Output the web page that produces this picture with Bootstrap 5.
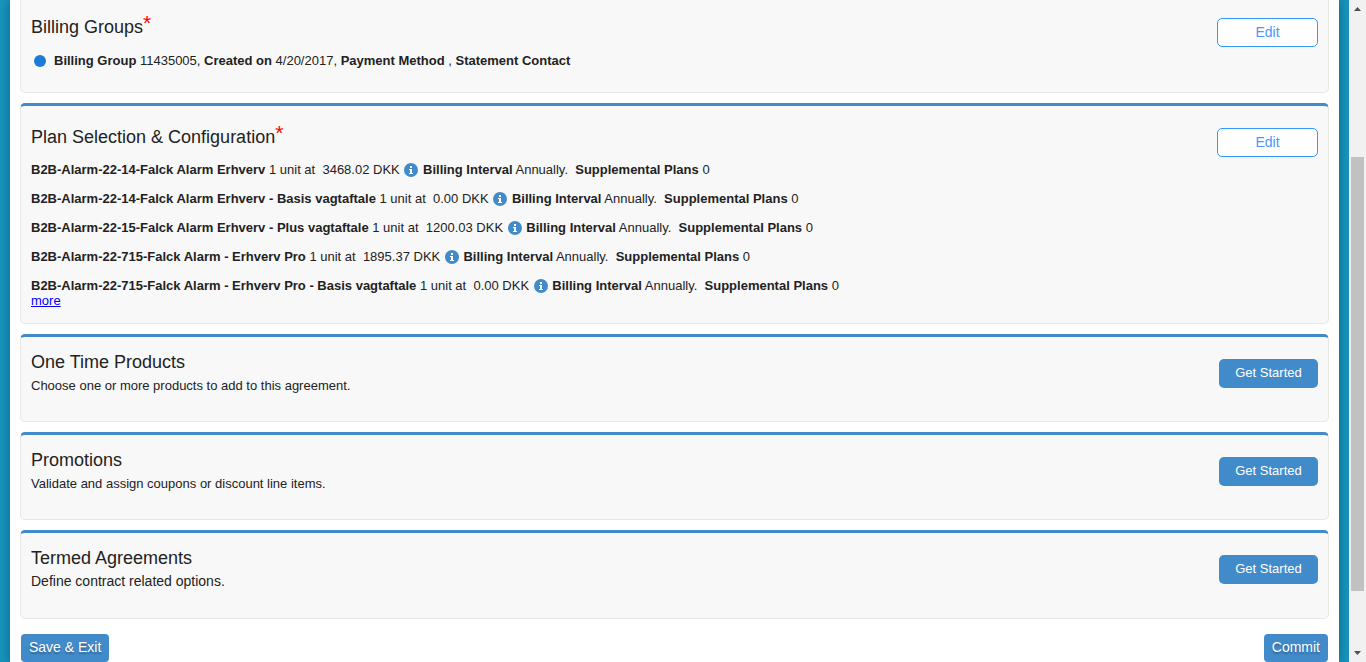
<!DOCTYPE html>
<html lang="en">
<head>
<meta charset="utf-8">
<meta name="viewport" content="width=device-width, initial-scale=1">
<title>Agreement setup</title>
<link href="https://cdn.jsdelivr.net/npm/bootstrap@5.3.0/dist/css/bootstrap.min.css" rel="stylesheet">
<style>
  body { font: 13px/15px "Liberation Sans", Arial, sans-serif; color: #222; background: #1794be; }
  .page-area { padding: 0 10px; }
  .sheet { display: flow-root; background: #fff; box-shadow: 0 0 10px rgba(0,0,0,.35); padding: 0 10px; }
  .sections { margin-top: -7px; gap: 10px; }
  .panel { background: #f8f8f8; border: 1px solid #e7e7e7; border-top: 3px solid #428bca; border-radius: 5px; padding: 0 10px; }
  .panel-billing { min-height: 100px; }
  .panel-plans { min-height: 221px; }
  .panel-short { min-height: 88px; }
  .panel-terms { min-height: 89px; font-size: 14px; }
  .panel h2 { font-size: 18px; line-height: 20px; font-weight: 400; margin: 15px 0 6px; color: #222; }
  .panel h2.required { margin: 21px 0 16px; }
  .required span { color: #f00; font-size: 21px; line-height: 0; vertical-align: 3px; }
  .panel .btn { margin-top: 22px; height: 29px; padding: 0 0 2px; line-height: 20px; border-radius: 5px; }
  .btn-edit { width: 101px; font-size: 14px; background: #fff; border: 1px solid #3399ff; color: #4d94ff; }
  .btn-start { width: 99px; font-size: 13px; }
  .btn-start, .btn-foot { background: #428bca; border: 0; color: #fff; }
  .btn-start:hover, .btn-foot:hover { background: #3276b1; color: #fff; }
  .btn-foot { height: 28px; padding: 0 8px 2px; font-size: 14px; line-height: 20px; border-radius: 4px; text-shadow: 0 2px 2px rgba(0,0,0,.3); }
  .foot-row { padding: 15px 1px 0; }
  .plan-list { gap: 14px; }
  .panel-plans h2.required { margin-bottom: 15px; }
  .dot { width: 12px; height: 12px; background: #1c7cd5; margin: 0 8px 0 3px; }
  .info { width: 14px; height: 14px; vertical-align: -3px; margin: 0 1px; }
  .more, .more:hover { color: #00f; }
  .scroll-strip { width: 17px; background: #f1f1f1; }
  .scroll-strip svg { width: 17px; height: 17px; flex: none; }
  .thumb { background: #c1c1c1; flex: 434 0 0; width: 13px; }
  .gap-above { flex: 140 0 0; }
  .gap-below { flex: 54 0 0; }
</style>
</head>
<body class="vh-100 overflow-hidden d-flex">
<svg class="d-none"><symbol id="info" viewBox="0 0 14 14"><circle cx="7" cy="7" r="7" fill="#428bca"/><path d="M6 3h2v2H6zM5 6h3v4h1v1H5v-1h1V7H5z" fill="#fff"/></symbol></svg>
<div class="page-area flex-grow-1 overflow-hidden">
  <main class="sheet h-100">
    <div class="sections d-flex flex-column">
      <section class="panel panel-billing d-flex justify-content-between align-items-start">
        <div>
          <h2 class="required">Billing Groups<span>*</span></h2>
          <div class="d-flex align-items-center"><i class="dot rounded-circle"></i><div><b>Billing Group</b> 11435005, <b>Created on</b> 4/20/2017, <b>Payment Method</b> , <b>Statement Contact</b></div></div>
        </div>
        <button type="button" class="btn btn-edit">Edit</button>
      </section>
      <section class="panel panel-plans d-flex justify-content-between align-items-start">
        <div>
          <h2 class="required">Plan Selection &amp; Configuration<span>*</span></h2>
          <ul class="plan-list list-unstyled d-flex flex-column mb-0">
            <li><b>B2B-Alarm-22-14-Falck Alarm Erhverv</b> 1 unit at &nbsp;3468.02 DKK <svg class="info"><use href="#info"/></svg> <b>Billing Interval</b> Annually. &nbsp;<b>Supplemental Plans</b> 0</li>
            <li><b>B2B-Alarm-22-14-Falck Alarm Erhverv - Basis vagtaftale</b> 1 unit at &nbsp;0.00 DKK <svg class="info"><use href="#info"/></svg> <b>Billing Interval</b> Annually. &nbsp;<b>Supplemental Plans</b> 0</li>
            <li><b>B2B-Alarm-22-15-Falck Alarm Erhverv - Plus vagtaftale</b> 1 unit at &nbsp;1200.03 DKK <svg class="info"><use href="#info"/></svg> <b>Billing Interval</b> Annually. &nbsp;<b>Supplemental Plans</b> 0</li>
            <li><b>B2B-Alarm-22-715-Falck Alarm - Erhverv Pro</b> 1 unit at &nbsp;1895.37 DKK <svg class="info"><use href="#info"/></svg> <b>Billing Interval</b> Annually. &nbsp;<b>Supplemental Plans</b> 0</li>
            <li><b>B2B-Alarm-22-715-Falck Alarm - Erhverv Pro - Basis vagtaftale</b> 1 unit at &nbsp;0.00 DKK <svg class="info"><use href="#info"/></svg> <b>Billing Interval</b> Annually. &nbsp;<b>Supplemental Plans</b> 0</li>
          </ul>
          <a href="#" class="more">more</a>
        </div>
        <button type="button" class="btn btn-edit">Edit</button>
      </section>
      <section class="panel panel-short d-flex justify-content-between align-items-start">
        <div><h2>One Time Products</h2><div>Choose one or more products to add to this agreement.</div></div>
        <button type="button" class="btn btn-start">Get Started</button>
      </section>
      <section class="panel panel-short d-flex justify-content-between align-items-start">
        <div><h2>Promotions</h2><div>Validate and assign coupons or discount line items.</div></div>
        <button type="button" class="btn btn-start">Get Started</button>
      </section>
      <section class="panel panel-terms d-flex justify-content-between align-items-start">
        <div><h2>Termed Agreements</h2><div>Define contract related options.</div></div>
        <button type="button" class="btn btn-start">Get Started</button>
      </section>
    </div>
    <div class="foot-row d-flex justify-content-between">
      <button type="button" class="btn btn-foot">Save &amp; Exit</button>
      <button type="button" class="btn btn-foot">Commit</button>
    </div>
  </main>
</div>
<div class="scroll-strip d-flex flex-column align-items-center flex-shrink-0" aria-hidden="true">
  <svg viewBox="0 0 17 17"><path d="M5 11l3.500-4 3.500 4z" fill="#505050"/></svg>
  <div class="gap-above"></div>
  <div class="thumb"></div>
  <div class="gap-below"></div>
  <svg viewBox="0 0 17 17"><path d="M5 6l3.500 4L12 6z" fill="#505050"/></svg>
</div>
<script src="https://cdn.jsdelivr.net/npm/bootstrap@5.3.0/dist/js/bootstrap.bundle.min.js"></script>
</body>
</html>
